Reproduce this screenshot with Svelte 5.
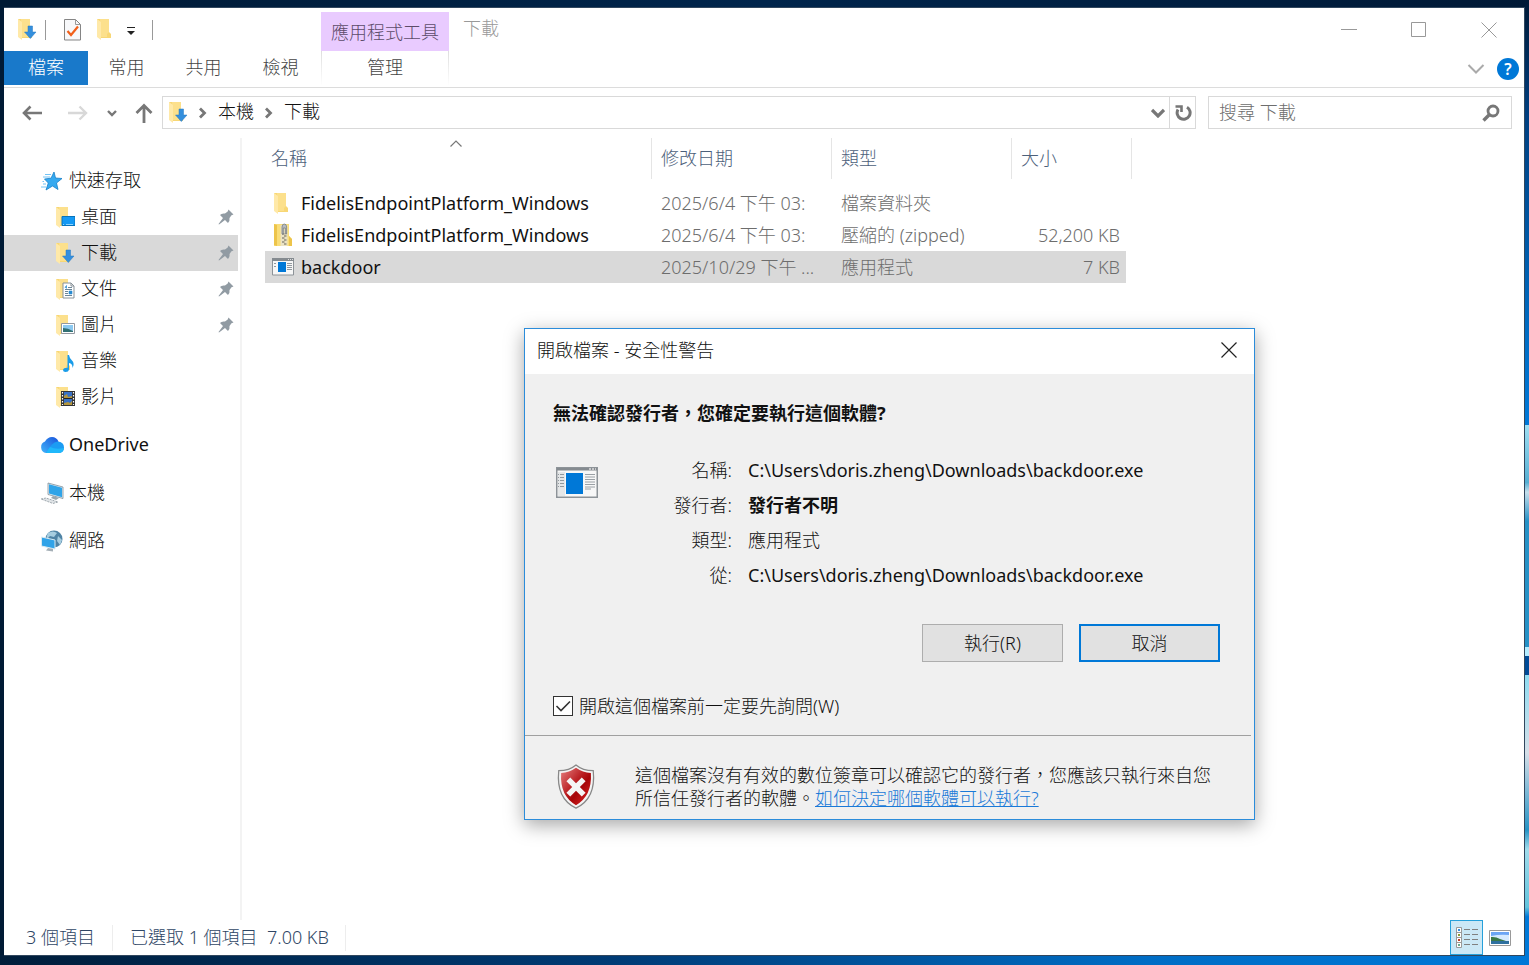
<script>
  let askBefore = $state(true);
  let dialogOpen = $state(true);
  let search = $state('');
  let currentPlace = $state('下載');
  let selectedFile = $state(2);
  let view = $state('details');

  const tabs = ['常用', '共用', '檢視'];

  const places = [
    { name: '快速存取', icon: 'star' },
    { name: '桌面', icon: 'desktop', child: true, pinned: true },
    { name: '下載', icon: 'downloads', child: true, pinned: true },
    { name: '文件', icon: 'documents', child: true, pinned: true },
    { name: '圖片', icon: 'pictures', child: true, pinned: true },
    { name: '音樂', icon: 'music', child: true },
    { name: '影片', icon: 'videos', child: true },
    { name: 'OneDrive', icon: 'onedrive', group: true, latin: true },
    { name: '本機', icon: 'computer', group: true },
    { name: '網路', icon: 'network', group: true }
  ];

  const files = [
    { name: 'FidelisEndpointPlatform_Windows', date: '2025/6/4 下午 03:', type: '檔案資料夾', size: '', icon: 'folder' },
    { name: 'FidelisEndpointPlatform_Windows', date: '2025/6/4 下午 03:', type: '壓縮的 (zipped)', size: '52,200 KB', icon: 'zip' },
    { name: 'backdoor', date: '2025/10/29 下午 ...', type: '應用程式', size: '7 KB', icon: 'app' }
  ];

  const details = [
    { label: '名稱:', value: 'C:\\Users\\doris.zheng\\Downloads\\backdoor.exe', latin: true },
    { label: '發行者:', value: '發行者不明', strong: true },
    { label: '類型:', value: '應用程式' },
    { label: '從:', value: 'C:\\Users\\doris.zheng\\Downloads\\backdoor.exe', latin: true }
  ];
</script>

{#snippet folderShape()}
  <path d="M1 1h12v13l2 2v4H4z" fill="#f8d775" />
  <path d="M4 1h9v13l-2 2v3H5z" fill="#fce08c" />
  <path d="M1 1l4 3v18l-4-3z" fill="#ffe9a8" />
{/snippet}

{#snippet icon(name)}
  {#if name === 'app'}
    <svg class="icon" width="22" height="18" viewBox="0 0 22 18" aria-hidden="true">
      <path d="M.5.5h21v16.500H.5z" fill="#f7f7f7" stroke="#8d9398" />
      <path d="M0 0h22v3H0z" fill="#858b90" />
      <path d="M16 1.500h1M18 1.500h1M20 1.500h1" stroke="#ddd" />
      <path d="M2 5.500h2M2 8.500h2M15 5.500h5M15 7.500h5M15 9.500h5M15 11.500h5" stroke="#92999e" />
      <path d="M6 4h8v10H6z" fill="#0078d7" />
    </svg>
  {:else if name === 'zip'}
    <svg class="icon" width="22" height="24" viewBox="0 0 22 24" aria-hidden="true">
      <path d="M2 1h15v12l3 3v7H2z" fill="#f9dd78" />
      <path d="M2 1l3 1v21l-3-1zM17 13l3 3v7h-3z" fill="#edc44a" />
      <path d="M8.500 2h7v21h-7z" fill="#ebe3c4" />
      <path d="M10 11h2.500M12 13h2.500M10 15h2.500M12 17h2.500M10 19h2.500M12 21h2.500" stroke="#696458" stroke-width="1.200" />
      <path d="M10 11V4q0-3 2.300-3t2.300 3v7h-1.300V5h-2v6z" fill="#b8bcc1" stroke="#6f747a" stroke-width=".7" />
    </svg>
  {:else if name === 'star'}
    <svg class="icon" width="24" height="22" viewBox="0 0 24 22" aria-hidden="true">
      <path d="M14 2l1.500 6 6.500.500-5.500 4.500 1.500 6.500-5.500-3.500-6.500 4 2.300-7L4.500 9l6.500-.800z" fill="#35a9f0" stroke="#167fc8" stroke-width=".8" />
      <path d="M5 4.500h6M3 7h7M4 11.500H2.500M6 14H3M6 17H1" stroke="#73c3f4" stroke-width="1" />
    </svg>
  {:else if name === 'onedrive'}
    <svg class="icon" width="24" height="20" viewBox="0 0 24 20" aria-hidden="true">
      <defs>
        <linearGradient id="cloud" x1="0" y1="1" x2="1" y2="0">
          <stop offset="0" stop-color="#42b4fa" />
          <stop offset="1" stop-color="#1a55dc" />
        </linearGradient>
      </defs>
      <path d="M6 18a6 6 0 01-1-11.500Q7.500 2 12 2q4.500 0 6.500 4.500L12 18z" fill="url(#cloud)" />
      <path d="M17.500 6.500q6.500.500 6.500 6 0 5.500-6 5.500H6q2-4 5.500-8 3-3.500 6-3.500z" fill="#1c9cf3" />
      <path d="M10 12q6 3 14 1-.5 5-6 5H6q1.500-3 4-6z" fill="#20b8fb" />
    </svg>
  {:else if name === 'computer'}
    <svg class="icon" width="24" height="22" viewBox="0 0 24 22" aria-hidden="true">
      <path d="M8 1l15 4v11.500L8 12.500z" fill="#e6eef3" stroke="#71818c" stroke-width=".7" />
      <path d="M9 2.300l13 3.500v9.500L9 11.500z" fill="#30a4e8" />
      <path d="M13 14l6 2-3 2-5-2z" fill="#9ba7ae" />
      <path d="M1 17l5-1 12 4-5 1.500z" fill="#dfe3e6" stroke="#8d989f" stroke-width=".8" stroke-dasharray="2 1" />
    </svg>
  {:else if name === 'network'}
    <svg class="icon" width="24" height="24" viewBox="0 0 24 24" aria-hidden="true">
      <circle cx="14" cy="10" r="8.500" fill="#4f83a5" />
      <path d="M8 4q5-3 9 0l-3 4-4-1-3 3q-1-3 1-6zM18 7l4 4-2 5-3-4z" fill="#a6cde0" />
      <path d="M1.500 8l13.500 3v9L1.500 17z" fill="#31a3e8" stroke="#d9eaf2" />
      <path d="M8 19l5 1v2.500l-7-1z" fill="#a4afb6" />
    </svg>
  {:else}
    <svg class="icon" width="20" height="23" viewBox="0 0 20 23" aria-hidden="true">
      {@render folderShape()}
      {#if name === 'desktop'}
        <path d="M7 10.500h13v9H7z" fill="#1499f4" stroke="#0873ba" />
        <path d="M8 18.500h11" stroke="#8bd4ff" stroke-dasharray="1 2 7 2" />
      {:else if name === 'downloads'}
        <path d="M11 8h4.500v6H19l-5.700 6.500L7.500 14H11z" fill="#348fdd" stroke="#2479c2" stroke-width=".5" />
      {:else if name === 'documents'}
        <path d="M8 5h8l3 3v12H8z" fill="#fff" stroke="#889299" />
        <path d="M16 5v3h3" fill="none" stroke="#889299" />
        <path d="M13 9.500h4M10 11.500h7M10 13.500h3M10 15.500h3M10 17.500h7" stroke="#6a8598" />
        <path d="M10 9.500l1.500-2v3M14 13h3v3h-3z" fill="#298bd0" stroke="#298bd0" stroke-width=".6" />
      {:else if name === 'pictures'}
        <path d="M6.500 9.500h13v10h-13z" fill="#fff" stroke="#9298a0" />
        <path d="M8 11h10v7H8z" fill="#8bc9f1" />
        <path d="M8 14q5 0 10 3v1H8z" fill="#327174" />
      {:else if name === 'music'}
        <path d="M12.500 5h1.500q.5 3.500 3 5.500 3 3 .5 7.500.2-4.500-3.500-5v6.500q-.5 2.500-3.500 2.500-2.500 0-2.500-2 .5-2.500 4.500-2.300z" fill="#199ce9" />
      {:else if name === 'videos'}
        <path d="M6 5h14v15H6z" fill="#343434" />
        <path d="M9 6h8v13H9z" fill="#3871c5" />
        <path d="M9 10l3-2 1 3 4-1v2.500H9zM9 17l4-1 2 1 2-2v4H9z" fill="#b4963c" />
        <path d="M7.500 6v13M18.500 6v13" stroke="#fff" stroke-width="1.200" stroke-dasharray="1.500 1.500" />
        <path d="M9 12.500h8" stroke="#222" />
      {/if}
    </svg>
  {/if}
{/snippet}

{#snippet appShape()}
  <path d="M.75.75h40.500v29.500H.75z" fill="#f7f7f7" stroke="#8d9398" stroke-width="1.500" />
  <path d="M1 1h40v2.500H1z" fill="#858b90" />
  <path d="M33 2h2M36 2h2M39 2h1" stroke="#ddd" stroke-width="1.500" />
  <path d="M2 5h7v24H2z" fill="#e5e7e8" />
  <path d="M2 7.500h6M2 10.500h6M2 13.500h6M2 16.500h6M2 19.500h6" stroke="#92999e" stroke-dasharray="1 1 4 1" />
  <path d="M10 6h17v21H10z" fill="#0078d7" />
  <path d="M29 7.500h10M29 10h10M29 12.500h10M29 15h10M29 17.500h10M29 20h10M29 22h6" stroke="#9aa0a5" />
{/snippet}

{#snippet landscape()}
  <svg width="22" height="16" viewBox="0 0 22 16" aria-hidden="true">
    <path d="M.5.5h21v15H.5z" fill="#fff" stroke="#999" />
    <path d="M2 2h18v12H2z" fill="#6ba5f5" />
    <path d="M2 6q9-2 18-1v6H2z" fill="#d5eaff" />
    <path d="M2 7q5-.5 9 2l6 2H2z" fill="#3b7848" />
    <path d="M2 11h18v3H2z" fill="#2f709f" />
  </svg>
{/snippet}

<div class="desktop">
  <main class="window">
    <header class="titlebar">
      <div class="quick-bar">
        {@render icon('downloads')}
        <span class="bar-line"></span>
        <button type="button" class="quick-check" aria-label="內容">
          <svg width="19" height="24" viewBox="0 0 19 24" aria-hidden="true">
            <path d="M1.500 1.500h11l5 5v15.500h-16z" fill="#f7f8fa" stroke="#858585" />
            <path d="M12.500 1.500v5h5" fill="none" stroke="#999" />
            <path d="M4.500 13l3.500 4 7-8.500" fill="none" stroke="#f1601b" stroke-width="2.200" />
          </svg>
        </button>
        <button type="button" aria-label="新增資料夾">{@render icon('folder')}</button>
        <button type="button" class="quick-more" aria-label="自訂快速存取工具列">
          <svg width="10" height="12" viewBox="0 0 10 12" aria-hidden="true">
            <path d="M1 3.500h8" stroke="#222" />
            <path d="M1 7h8l-4 4z" fill="#222" />
          </svg>
        </button>
        <span class="bar-line"></span>
      </div>
      <div class="tool-group">應用程式工具</div>
      <h1>下載</h1>
      <div class="window-controls">
        <button type="button" aria-label="最小化">
          <svg width="16" height="16" viewBox="0 0 16 16" aria-hidden="true"><path d="M0 7.500h16" /></svg>
        </button>
        <button type="button" aria-label="最大化">
          <svg width="16" height="16" viewBox="0 0 16 16" aria-hidden="true"><path d="M.5.5h14v14H.5z" /></svg>
        </button>
        <button type="button" aria-label="關閉">
          <svg width="16" height="16" viewBox="0 0 16 16" aria-hidden="true"><path d="M.5.5l15 15M15.500.5l-15 15" /></svg>
        </button>
      </div>
    </header>

    <nav class="ribbon">
      <button type="button" class="file-tab">檔案</button>
      {#each tabs as tab}
        <button type="button" class="tab">{tab}</button>
      {/each}
      <button type="button" class="manage-tab">管理</button>
      <div class="ribbon-end">
        <button type="button" aria-label="展開功能區">
          <svg width="18" height="12" viewBox="0 0 18 12" aria-hidden="true"><path d="M1.500 2l7.500 7.500L16.500 2" fill="none" stroke="#aaa" stroke-width="2" /></svg>
        </button>
        <button type="button" class="help" aria-label="說明">?</button>
      </div>
    </nav>

    <div class="nav-row">
      <div class="history">
        <button type="button" aria-label="上一頁">
          <svg width="20" height="18" viewBox="0 0 20 18" aria-hidden="true"><path d="M8.500 2.500L2 9l6.500 6.500M2 9h18" fill="none" stroke="#777" stroke-width="2.600" /></svg>
        </button>
        <button type="button" aria-label="下一頁">
          <svg width="20" height="18" viewBox="0 0 20 18" aria-hidden="true"><path d="M11.500 2.500L18 9l-6.500 6.500M18 9H0" fill="none" stroke="#d8d8d8" stroke-width="2.400" /></svg>
        </button>
        <button type="button" class="recent" aria-label="最近的位置">
          <svg width="10" height="8" viewBox="0 0 10 8" aria-hidden="true"><path d="M1 2l4 4 4-4" fill="none" stroke="#777" stroke-width="2.400" /></svg>
        </button>
        <button type="button" class="up" aria-label="上一層">
          <svg width="18" height="20" viewBox="0 0 18 20" aria-hidden="true"><path d="M1.500 10L9 2.500l7.500 7.500M9 2.500V20" fill="none" stroke="#777" stroke-width="2.800" /></svg>
        </button>
      </div>
      <div class="address">
        {@render icon('downloads')}
        {#each ['本機', '下載'] as crumb}
          <svg width="8" height="12" viewBox="0 0 8 12" aria-hidden="true"><path d="M1 1.500L5.500 6 1 10.500" fill="none" stroke="#777" stroke-width="2.800" /></svg>
          <button type="button" class="crumb">{crumb}</button>
        {/each}
        <button type="button" class="address-more" aria-label="先前的位置">
          <svg width="14" height="10" viewBox="0 0 14 10" aria-hidden="true"><path d="M1 2l6 6 6-6" fill="none" stroke="#777" stroke-width="3.200" /></svg>
        </button>
        <button type="button" class="refresh" aria-label="重新整理">
          <svg width="18" height="18" viewBox="0 0 18 18" aria-hidden="true">
            <path d="M13 3.200A6.500 6.500 0 114 5.500" fill="none" stroke="#777" stroke-width="3" />
            <path d="M1.500 2.500h6v5.500" fill="none" stroke="#777" stroke-width="2.600" />
          </svg>
        </button>
      </div>
      <label class="search">
        <input type="text" placeholder="搜尋 下載" aria-label="搜尋 下載" bind:value={search} />
        <svg width="18" height="18" viewBox="0 0 18 18" aria-hidden="true">
          <circle cx="11" cy="7" r="5" fill="none" stroke="#777" stroke-width="2.800" />
          <path d="M7.500 10.500L1.500 16.500" stroke="#777" stroke-width="3.400" />
        </svg>
      </label>
    </div>

    <div class="content">
      <nav class="sidebar">
        {#each places as place}
          <button
            type="button"
            class="place"
            class:child={place.child}
            class:group={place.group}
            class:active={currentPlace === place.name}
            onclick={() => (currentPlace = place.name)}
          >
            {@render icon(place.icon)}
            <span class:latin={place.latin}>{place.name}</span>
            {#if place.pinned}
              <svg class="pin" width="16" height="16" viewBox="0 0 16 16" aria-hidden="true">
                <path d="M10.500.5l5 5-2 .8-2 2.700q.5 3.500-1.500 5L7 11 1 15.500.5 15 5 9 2 6q1.500-2 5-1.500L9.700 2.500z" fill="#919ba3" />
              </svg>
            {/if}
          </button>
        {/each}
      </nav>

      <section class="files">
        <table>
          <colgroup>
            <col class="col-name" />
            <col class="col-date" />
            <col class="col-type" />
            <col class="col-size" />
            <col class="col-end" />
          </colgroup>
          <thead>
            <tr>
              <th>
                名稱
                <svg class="sort" width="12" height="8" viewBox="0 0 12 8" aria-hidden="true"><path d="M.5 6.500L6 1l5.500 5.500" fill="none" stroke="#777" stroke-width="1.200" /></svg>
              </th>
              <th>修改日期</th>
              <th>類型</th>
              <th colspan="2">大小</th>
            </tr>
          </thead>
          <tbody>
            {#each files as file, i}
              <tr class:selected={selectedFile === i} onclick={() => (selectedFile = i)}>
                <td>
                  <div class="file-name latin">
                    <span class="file-icon">{@render icon(file.icon)}</span>
                    {file.name}
                  </div>
                </td>
                <td>{file.date}</td>
                <td>{file.type}</td>
                <td class="size">{file.size}</td>
              </tr>
            {/each}
          </tbody>
        </table>
      </section>
    </div>

    <footer class="status">
      <span class="count">3 個項目</span>
      <span class="picked">已選取 1 個項目&nbsp; 7.00 KB</span>
      <div class="views">
        <button type="button" class:on={view === 'details'} aria-label="詳細資料" onclick={() => (view = 'details')}>
          <svg width="22" height="22" viewBox="0 0 22 22" aria-hidden="true">
            <path d="M.5.5h5v20h-5zM.5 5.500h5M.5 10.500h5M.5 15.500h5" fill="#fff" stroke="#999" />
            <path d="M2 3h2" stroke="#348fdd" stroke-width="2" />
            <path d="M2 8h2" stroke="#8a9b31" stroke-width="2" />
            <path d="M2 13h2" stroke="#c43d22" stroke-width="2" />
            <path d="M2 18h2" stroke="#6aa98b" stroke-width="2" />
            <path d="M8 2.500h6M16 2.500h6M8 7.500h6M16 7.500h6M8 12.500h6M16 12.500h6M8 17.500h6M16 17.500h6" stroke="#808080" />
          </svg>
        </button>
        <button type="button" class:on={view === 'large'} aria-label="大圖示" onclick={() => (view = 'large')}>
          {@render landscape()}
        </button>
      </div>
    </footer>
  </main>

  {#if dialogOpen}
    <div class="dialog" role="dialog" aria-labelledby="dialog-title">
      <div class="dialog-title">
        <h2 id="dialog-title">開啟檔案 - 安全性警告</h2>
        <button type="button" aria-label="關閉" onclick={() => (dialogOpen = false)}>
          <svg width="16" height="16" viewBox="0 0 16 16" aria-hidden="true"><path d="M.5.5l15 15M15.500.5l-15 15" stroke="#222" stroke-width="1.200" /></svg>
        </button>
      </div>
      <div class="dialog-body">
        <h3>無法確認發行者，您確定要執行這個軟體?</h3>
        <div class="details">
          <svg width="44" height="32" viewBox="-1 0 44 32" aria-hidden="true">{@render appShape()}</svg>
          <dl>
            {#each details as row}
              <dt>{row.label}</dt>
              <dd class:strong={row.strong} class:latin={row.latin}>{row.value}</dd>
            {/each}
          </dl>
        </div>
        <div class="actions">
          <button type="button">執行(R)</button>
          <button type="button" class="default" onclick={() => (dialogOpen = false)}>取消</button>
        </div>
        <label class="ask">
          <input type="checkbox" bind:checked={askBefore} />
          開啟這個檔案前一定要先詢問(W)
        </label>
      </div>
      <div class="warning">
        <svg width="42" height="46" viewBox="0 0 42 48" aria-hidden="true">
          <defs>
            <linearGradient id="shield" x1="0" y1="0" x2="1" y2="1">
              <stop offset="0" stop-color="#e68080" />
              <stop offset=".45" stop-color="#b91c20" />
              <stop offset=".6" stop-color="#a60508" />
              <stop offset="1" stop-color="#e32a2a" />
            </linearGradient>
          </defs>
          <path d="M21 1q7 6 18 6 3 29-18 39Q0 36 3 7q11 0 18-6z" fill="#f4f4f4" stroke="#888" stroke-width="1.300" />
          <path d="M21 4q7 5 15.500 5.500 1.500 24-15.500 33.500Q4 33.500 5.500 9.500 14 9 21 4z" fill="url(#shield)" />
          <path d="M15 14l6 6 6-6 4 4-6 6 6 6-4 4-6-6-6 6-4-4 6-6-6-6z" fill="#f4f4f4" />
        </svg>
        <p>這個檔案沒有有效的數位簽章可以確認它的發行者，您應該只執行來自您所信任發行者的軟體。<a href="#help">如何決定哪個軟體可以執行?</a></p>
      </div>
    </div>
  {/if}
</div>

<style>
  :global(body) {
    margin: 0;
  }

  .desktop {
    position: relative;
    display: flex;
    box-sizing: border-box;
    min-height: 100vh;
    padding: 7px 4px 9px;
    background:
      linear-gradient(#001936 0%, #003f80 12%, #006dc4 35%, #0078d7 44%, #9fe0f4 44%, #55aed2 50%, #c5dfec 51%, #2591c6 54%, #2591c6 67%, #b4ecff 67%, #b4ecff 68%, #004b97 68%, #004b97 70%, #8edcf2 70%, #d5dfe8 78%, #2693c4 86%, #a0dcec 88%, #63c4dd 94%, #0078d7 95%) right / 4px 100% no-repeat,
      linear-gradient(90deg, #001d3a 0%, #003b75 40%, #006dc5 75%, #0078d7 100%) bottom / 100% 10px no-repeat,
      linear-gradient(90deg, #001a35 0%, #00254c 50%, #001936 100%);
    color: #111;
    font: 18px/24px "Noto Sans", "Noto Sans CJK TC", sans-serif;
    font-weight: 300;
  }

  button,
  input {
    margin: 0;
    padding: 0;
    border: 0;
    background: none;
    color: inherit;
    font: inherit;
  }

  svg {
    flex: none;
    display: block;
  }

  h1,
  h2,
  h3,
  p,
  dl,
  dd {
    margin: 0;
    font-size: inherit;
    font-weight: inherit;
  }

  .latin {
    font-weight: 400;
  }

  .window {
    flex: 1;
    display: flex;
    flex-direction: column;
    min-width: 0;
    border: 1px solid #31475e;
    border-width: 1px 1px 1px 0;
    background: #fff;
  }

  /* Title bar */
  .titlebar {
    display: flex;
    height: 43px;
    color: #999;
  }

  .quick-bar {
    display: flex;
    align-items: center;
    gap: 8px;
    box-sizing: border-box;
    width: 317px;
    padding-left: 13px;
  }

  .bar-line {
    width: 1px;
    height: 20px;
    background: #999;
  }

  .quick-check {
    margin: 0 6px 0 9px;
  }

  .quick-more {
    margin: 0 8px 0 2px;
  }

  .tool-group {
    box-sizing: border-box;
    width: 128px;
    margin-top: 4px;
    padding-top: 8px;
    background: #e9cbff;
    color: #5c4b69;
    text-align: center;
  }

  h1 {
    padding: 8px 14px;
  }

  .window-controls {
    display: flex;
    margin-left: auto;
  }

  .window-controls button {
    display: grid;
    place-items: center;
    width: 70px;
  }

  .window-controls path {
    fill: none;
    stroke: #999;
  }

  /* Ribbon */
  .ribbon {
    display: flex;
    height: 36px;
    border-bottom: 1px solid #dcdcdc;
    color: #444;
  }

  .ribbon > button {
    height: 34px;
    padding-bottom: 2px;
  }

  .file-tab {
    width: 84px;
    background: #1979ca;
    color: #fff;
  }

  .tab {
    width: 77px;
  }

  .manage-tab {
    width: 128px;
    margin-left: 2px;
    border: solid transparent;
    border-width: 0 1px;
    border-image: linear-gradient(#ddd, #fff) 1;
  }

  .ribbon-end {
    display: flex;
    align-items: center;
    gap: 12px;
    margin-left: auto;
    padding-right: 5px;
  }

  .help {
    width: 22px;
    height: 22px;
    border-radius: 50%;
    background: #0078d7;
    color: #fff;
    font-size: 16px;
    font-weight: 600;
    line-height: 22px;
  }

  /* Navigation row */
  .nav-row {
    display: flex;
    height: 33px;
    padding: 8px 12px 9px 0;
  }

  .history {
    display: flex;
    align-items: center;
    box-sizing: border-box;
    width: 158px;
    padding-left: 18px;
    gap: 26px;
  }

  .recent {
    margin-left: -7px;
  }

  .up {
    margin-left: -8px;
  }

  .address,
  .search {
    display: flex;
    align-items: center;
    box-sizing: border-box;
    border: 1px solid #d9d9d9;
  }

  .address {
    flex: 1;
    gap: 11px;
    padding-left: 5px;
  }

  .crumb {
    padding-bottom: 3px;
  }

  .address-more {
    margin-left: auto;
  }

  .refresh {
    display: grid;
    place-items: center;
    align-self: stretch;
    width: 26px;
    margin-left: -7px;
    border-left: 1px solid #d9d9d9;
  }

  .search {
    width: 304px;
    margin-left: 12px;
    padding: 0 11px 0 10px;
  }

  .search input {
    flex: 1;
    min-width: 0;
    padding-bottom: 2px;
    outline: 0;
  }

  .search input::placeholder {
    color: #6d6d6d;
    opacity: 1;
  }

  /* Places and files */
  .content {
    flex: 1;
    display: flex;
  }

  .sidebar {
    display: flex;
    flex-direction: column;
    box-sizing: border-box;
    width: 238px;
    padding: 25px 2px 0 0;
    border-right: 2px solid #f3f3f3;
  }

  .place {
    display: flex;
    align-items: center;
    gap: 5px;
    height: 36px;
    padding: 0 4px 0 36px;
    text-align: left;
  }

  .place span {
    padding-bottom: 2px;
  }

  .child {
    gap: 6px;
    padding-left: 51px;
  }

  .group {
    margin-top: 12px;
  }

  .active {
    background: #d9d9d9;
  }

  .pin {
    margin-left: auto;
  }

  .files {
    flex: 1;
    min-width: 0;
    padding-left: 23px;
  }

  table {
    width: 867px;
    border-spacing: 0;
    table-layout: fixed;
    color: #6d6d6d;
  }

  .col-name {
    width: 387px;
  }

  .col-date,
  .col-type {
    width: 180px;
  }

  .col-size {
    width: 114px;
  }

  .col-end {
    width: 6px;
  }

  th {
    position: relative;
    box-sizing: border-box;
    height: 41px;
    padding: 0 9px 2px;
    border-right: 1px solid #e5e5e5;
    color: #4c607a;
    font-weight: inherit;
    text-align: left;
  }

  th:first-child {
    padding-left: 6px;
  }

  thead::after {
    content: "";
    display: block;
    height: 8px;
  }

  .sort {
    position: absolute;
    top: 2px;
    left: 50%;
    margin-left: -8px;
  }

  td {
    height: 32px;
    padding: 0 6px 0 9px;
    white-space: nowrap;
  }

  td:first-child {
    padding-left: 6px;
    color: #111;
  }

  .file-name {
    display: flex;
    align-items: center;
    gap: 6px;
  }

  .file-icon {
    display: grid;
    place-items: center;
    width: 24px;
  }

  .size {
    text-align: right;
  }

  .selected td {
    background: #d9d9d9;
  }

  /* Status bar */
  .status {
    display: flex;
    align-items: center;
    height: 35px;
    color: #2f4665;
  }

  .status > span {
    padding-bottom: 2px;
    border-right: 1px solid #ededed;
  }

  .status .count {
    padding-right: 17px;
    padding-left: 22px;
  }

  .status .picked {
    padding-right: 16px;
    padding-left: 17px;
  }

  .views {
    display: flex;
    align-self: stretch;
    margin-left: auto;
    padding-right: 8px;
  }

  .views button {
    display: grid;
    place-items: center;
    width: 33px;
    border: 1px solid transparent;
  }

  .views .on {
    border-color: #26a0da;
    background: #cbe8f6;
  }

  /* Security warning */
  .dialog {
    position: absolute;
    top: 328px;
    left: 524px;
    box-sizing: border-box;
    width: 731px;
    border: 1px solid #2b8cda;
    background: #f0f0f0;
    box-shadow: 0 5px 18px rgba(0, 0, 0, 0.35);
  }

  .dialog-title {
    display: flex;
    align-items: center;
    justify-content: space-between;
    box-sizing: border-box;
    height: 45px;
    padding: 0 17px 3px 12px;
    background: #fff;
  }

  .dialog-body {
    padding: 27px 34px 17px 28px;
  }

  h3,
  .strong {
    font-weight: 700;
  }

  .details {
    display: flex;
    margin: 28px 0 31px;
  }

  .details > svg {
    margin: 14px 0 0 2px;
  }

  dl {
    display: grid;
    grid-template-columns: 133px 1fr;
    column-gap: 16px;
    line-height: 35px;
  }

  dt {
    text-align: right;
  }

  .actions {
    display: flex;
    justify-content: flex-end;
    gap: 16px;
  }

  .actions button {
    width: 141px;
    height: 38px;
    border: 1px solid #adadad;
    background: #e1e1e1;
  }

  .actions .default {
    border: 2px solid #0078d7;
  }

  .ask {
    display: flex;
    align-items: center;
    gap: 6px;
    margin-top: 32px;
  }

  .ask input {
    appearance: none;
    width: 20px;
    height: 20px;
    border: 1px solid #333;
    background: #fff;
  }

  .ask input:checked {
    background: #fff url("data:image/svg+xml,%3Csvg xmlns='http://www.w3.org/2000/svg' viewBox='0 0 18 18'%3E%3Cpath d='M2.500 9l4.500 4.500 9-9' fill='none' stroke='%23333' stroke-width='1.600'/%3E%3C/svg%3E");
  }

  .warning {
    display: flex;
    gap: 38px;
    margin-right: 3px;
    padding: 28px 36px 9px 30px;
    border-top: 1px solid #a0a0a0;
  }

  .warning p {
    line-height: 23px;
  }

  a {
    color: #1979d8;
  }
</style>
